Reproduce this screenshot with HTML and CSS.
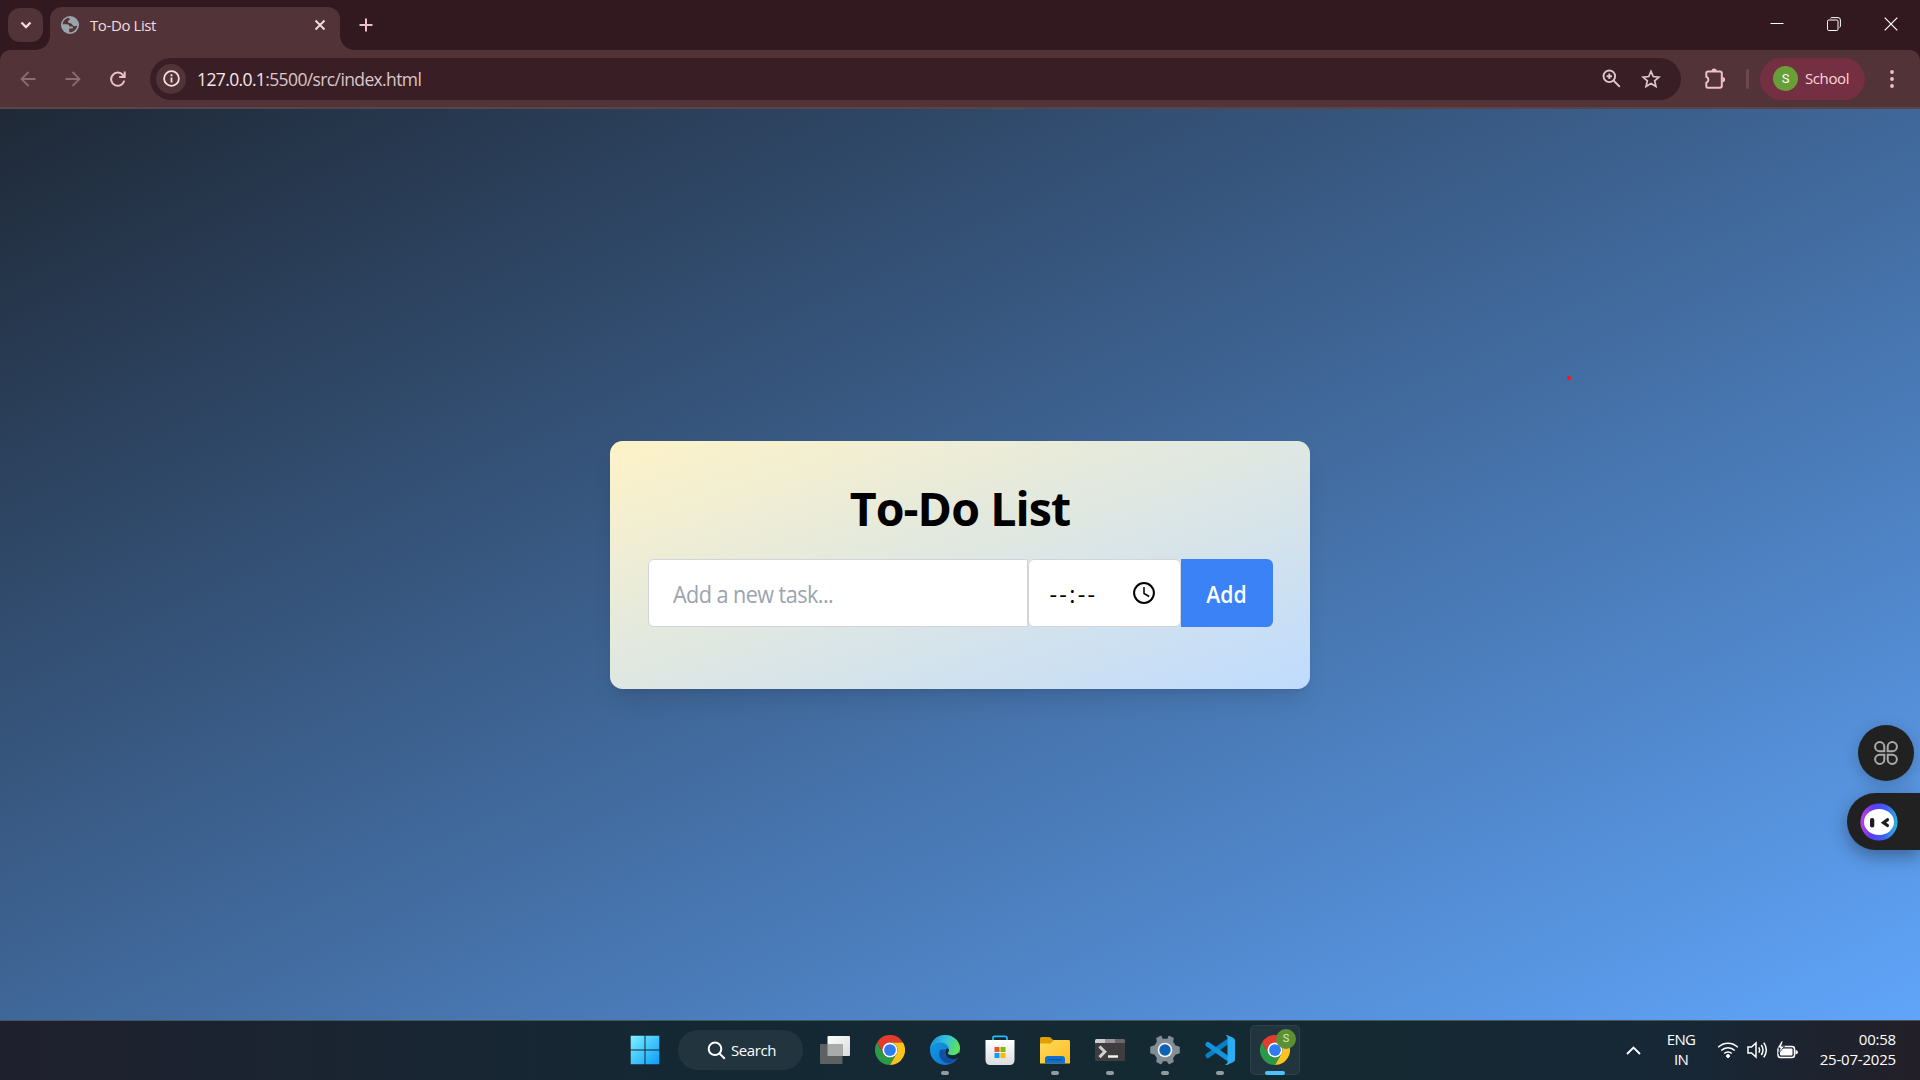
FILE: index.html
```html
<!DOCTYPE html>
<html lang="en">
<head>
<meta charset="utf-8">
<title>To-Do List</title>
<link rel="stylesheet" href="styles.css">
</head>
<body>
<svg class="defs" width="0" height="0" aria-hidden="true">
  <defs>
    <linearGradient id="win" x1="0" y1="0" x2="1" y2="1"><stop offset="0" stop-color="#7cf3ff"/><stop offset="1" stop-color="#0a9bf8"/></linearGradient>
    <linearGradient id="edgeTop" x1="0" y1="0.3" x2="1" y2="0.6"><stop offset="0" stop-color="#1c8fdc"/><stop offset=".45" stop-color="#32bfe0"/><stop offset="1" stop-color="#62e84c"/></linearGradient>
    <linearGradient id="edgeSide" x1="0" y1="0" x2="1" y2="1"><stop offset="0" stop-color="#169ce0"/><stop offset="1" stop-color="#0b6fd2"/></linearGradient>
    <linearGradient id="folder" x1="0" y1="0" x2="1" y2="1"><stop offset="0" stop-color="#ffda5e"/><stop offset="1" stop-color="#fdbd20"/></linearGradient>
    <linearGradient id="bag" x1="0" y1="0" x2="0" y2="1"><stop offset="0" stop-color="#fff"/><stop offset="1" stop-color="#dcdde0"/></linearGradient>
    <linearGradient id="pane" x1="0" y1="0" x2="1" y2="1"><stop offset="0" stop-color="#fff"/><stop offset="1" stop-color="#d9dadb"/></linearGradient>
    <linearGradient id="bot" x1="0" y1=".8" x2="1" y2=".9"><stop offset="0" stop-color="#b63ee8"/><stop offset=".3" stop-color="#5a3df2"/><stop offset=".65" stop-color="#3a62f5"/><stop offset="1" stop-color="#25c3d8"/></linearGradient>
    <symbol id="chrome" viewBox="0 0 48 48">
      <path fill="#e33b2e" d="M24 12H44.8A24 24 0 0 0 3.2 12L13.6 30 24 24Z"/>
      <path fill="#2b9a47" d="M3.2 12 13.6 30A12 12 0 0 0 34.4 30L24 48A24 24 0 0 1 3.2 12Z"/>
      <path fill="#fcc31e" d="M24 12H44.8A24 24 0 0 1 24 48L34.4 30A12 12 0 0 0 24 12Z"/>
      <circle cx="24" cy="24" r="12" fill="#fff"/><circle cx="24" cy="24" r="9.4" fill="#2f7bf0"/>
    </symbol>
  </defs>
</svg>
<div class="screen">
  <header class="tabstrip">
    <button class="tab-search" aria-label="Search tabs"><svg width="12" height="8" viewBox="0 0 12 8"><path d="M1.5 1.5 6 6l4.500-4.500" fill="none" stroke="#f3dde1" stroke-width="2.300"/></svg></button>
    <div class="tab">
      <svg class="globe" width="18" height="18" viewBox="0 0 18 18"><circle cx="9" cy="9" r="9" fill="#9aa5ab"/><path d="M8.200 1.800C4.500 2.200 2 5 1.700 8.300H6c1.600 0 2.300.9 2.300 2.200h2.400c.8 0 1.300.6 1.300 1.400v.7H8.200v3.600c4 .3 7.600-2.800 8-6.800-1.300.8-2.800 1-4 .3-1.300-.7-.9-1.800-2-2.200-1.200-.4-3-.1-3.200-1.500-.2-1.500 1.300-1.600 1.700-2.400z" fill="#513338"/></svg>
      <span class="tab-title">To-Do List</span>
      <svg class="close" width="12" height="12" viewBox="0 0 12 12"><path d="m1.500 1.500 9 9m0-9-9 9" stroke="#f3dde1" stroke-width="1.900"/></svg>
    </div>
    <svg class="plus" width="14" height="14" viewBox="0 0 14 14"><path d="M7 .5v13M.5 7h13" stroke="#efbfca" stroke-width="2"/></svg>
    <div class="window-controls">
      <svg width="14" height="14" viewBox="0 0 14 14"><path d="M.5 6.500h13" stroke="#fff" stroke-width="1"/></svg>
      <svg width="14" height="14" viewBox="0 0 14 14" fill="none" stroke="#fff"><rect x=".5" y="3" width="10.500" height="10.500" rx="1.200"/><path d="M3.500 1.200Q4 .6 5 .6h6q2.400 0 2.400 2.400v6q0 1-.8 1.500"/></svg>
      <svg width="14" height="14" viewBox="0 0 14 14"><path d="m.7.7 12.600 12.600m0-12.600L.7 13.300" stroke="#fff" stroke-width="1.200"/></svg>
    </div>
  </header>

  <nav class="toolbar">
    <svg class="nav-icon" width="16" height="16" viewBox="0 0 16 16" fill="none" stroke="#8d6b72" stroke-width="1.800"><path d="M15.500 8H2M8.500 1 1.500 8l7 7"/></svg>
    <svg class="nav-icon" width="16" height="16" viewBox="0 0 16 16" fill="none" stroke="#8d6b72" stroke-width="1.800"><path d="M.5 8H14M7.500 1l7 7-7 7"/></svg>
    <svg class="nav-icon" width="16" height="16" viewBox="0 0 16 16" fill="none" stroke="#efbfca" stroke-width="2"><path d="M14.200 9.600A6.600 6.600 0 1 1 13 4.200L14 5.500M14.700.5V6H9.200"/></svg>
    <div class="omnibox">
      <span class="site-info"><svg width="17" height="17" viewBox="0 0 17 17"><circle cx="8.500" cy="8.500" r="7.400" fill="none" stroke="#f6dfe3" stroke-width="1.800"/><path d="M8.500 7.600v5M8.500 4.200v2" stroke="#f6dfe3" stroke-width="1.800"/></svg></span>
      <span class="url"><b>127.0.0.1</b>:5500/src/index.html</span>
      <svg class="zoom" width="19" height="19" viewBox="0 0 19 19" fill="none" stroke="#dcc6ca" stroke-width="1.900"><circle cx="7.300" cy="7.300" r="5.800"/><path d="m11.500 11.500 6.300 6.300M7.300 4.600V10M4.600 7.300H10"/></svg>
      <svg class="star" width="20" height="20" viewBox="0 0 20 20" fill="none" stroke="#dcc6ca" stroke-width="1.700"><path d="m10 2.300 2.250 5.250 5.700.5-4.320 3.750 1.300 5.580L10 14.400l-4.930 2.980 1.300-5.580L2.050 8.050l5.700-.5z"/></svg>
    </div>
    <svg class="puzzle" width="22" height="22" viewBox="0 0 22 22"><path d="M4 3.500H16q1.800 0 1.800 1.800V18q0 1.700-1.800 1.700H3.800q-1.500 0-1.500-1.500v-3.400a3.200 3.200 0 0 0 0-6V5q0-1.500 1.700-1.500Z" fill="none" stroke="#efbfca" stroke-width="2"/><path d="M7.500 3a2.600 2.600 0 0 1 5.200 0zM18.500 9a2.600 2.600 0 0 1 0 5.200z" fill="#efbfca"/></svg>
    <i class="divider"></i>
    <div class="profile"><span class="avatar">S</span><span class="profile-name">School</span></div>
    <svg class="menu" width="4" height="18" viewBox="0 0 4 18" fill="#efbfca"><circle cx="2" cy="2" r="1.900"/><circle cx="2" cy="9" r="1.900"/><circle cx="2" cy="16" r="1.900"/></svg>
  </nav>

  <main class="page">
    <section class="card">
      <h1>To-Do List</h1>
      <div class="form">
        <div class="field task"><span>Add a new task...</span></div>
        <div class="field time"><span>--:--</span>
          <svg width="22" height="22" viewBox="0 0 22 22" fill="none" stroke="#000"><circle cx="11" cy="11" r="9.900" stroke-width="2"/><path d="M11 5v6.500l5.200 3" stroke-width="1.500"/></svg>
        </div>
        <button class="add"><span>Add</span></button>
      </div>
    </section>
    <i class="dot"></i>
    <div class="float-apps"><svg width="24" height="24" viewBox="0 0 24 24" fill="none" stroke="#a9a9a9" stroke-width="2"><path d="M10.300 10.300H5.600a4.600 4.600 0 1 1 4.700-4.700zM13.700 10.300V5.600a4.600 4.600 0 1 1 4.700 4.700zM10.300 13.700v4.700a4.600 4.600 0 1 1-4.700-4.700zM13.700 13.700h4.700a4.600 4.600 0 1 1-4.700 4.700z"/></svg></div>
    <div class="float-bot"><svg width="38" height="38" viewBox="0 0 38 38"><circle cx="19" cy="19" r="18.600" fill="url(#bot)"/><ellipse cx="19" cy="19" rx="15" ry="13" fill="#fff"/><rect x="10" y="15" width="4.300" height="9.500" rx="2" fill="#1c1c1c"/><path d="m27.500 16.700-4 3 4 2.800" fill="none" stroke="#1c1c1c" stroke-width="3.200" stroke-linecap="round"/></svg></div>
  </main>

  <footer class="taskbar">
    <div class="apps">
      <div class="slot"><svg width="30" height="30" viewBox="0 0 30 30"><path fill="url(#win)" d="M.7.700h13.800v13.800H.7zM15.500.700h13.800v13.800H15.500zM.7 15.500h13.800v13.800H.7zM15.500 15.500h13.800v13.800H15.500z"/></svg></div>
      <div class="search"><svg width="19" height="19" viewBox="0 0 19 19" fill="none" stroke="#fff" stroke-width="2"><circle cx="8" cy="7.800" r="6.300"/><path d="m12.400 12.400 5.400 5.400"/></svg><span>Search</span></div>
      <div class="slot"><svg width="30" height="30" viewBox="0 0 30 30"><rect x="7.500" y="1" width="22.500" height="20" rx="1" fill="url(#pane)"/><rect x="0" y="9" width="22.500" height="20" rx="1" fill="#5f6061"/><path d="M7.500 9h15v12h-15z" fill="#a9aaaa"/></svg></div>
      <div class="slot"><svg width="30" height="30"><use href="#chrome"/></svg></div>
      <div class="slot running"><svg width="30" height="30" viewBox="0 0 30 30"><circle cx="15" cy="15" r="15" fill="url(#edgeSide)"/><path fill="#134f9f" d="M10 15c-3 7 3 14 10 13.600 3-.9 5.800-3 7.500-5.500.5-.8-.2-1.300-1-.9-4 2-10 1-11.500-4-.5-1.700 0-3 .8-4z"/><path fill="url(#edgeTop)" d="M0 14.500C.5 6 7 0 15 0c9 0 15 6.500 15 12.800 0 4.700-3.500 7.400-7.500 7.400-2.800 0-5-.9-4.800-2 .3-.8 1.300-1.400 1.300-3.500C19 10.500 15 7.500 10 7.500 5 7.500 1 11 0 14.500Z"/><path fill="#142733" d="M19 14.500c0 2-1 2.800-1.300 3.700-.2 1.100 2 2 4.800 2 3 0 5-1 6.300-2.600l1.700 2-3 3.500c-4 2.500-10.500.5-12-4.600-.6-2 .2-4 1.500-5.200z"/></svg></div>
      <div class="slot"><svg width="30" height="30" viewBox="0 0 30 30"><path d="M8 7V3q0-1.700 1.700-1.700h10.600Q22 1.300 22 3v4" fill="none" stroke="#27bdf2" stroke-width="1.700"/><path d="M.5 5h29v20q0 5-5 5h-19q-5 0-5-5z" fill="url(#bag)"/><path fill="#f25022" d="M9.500 12h5v5h-5z"/><path fill="#7fba00" d="M15.500 12h5v5h-5z"/><path fill="#00a4ef" d="M9.500 18h5v5h-5z"/><path fill="#ffb900" d="M15.500 18h5v5h-5z"/></svg></div>
      <div class="slot running"><svg width="30" height="30" viewBox="0 0 30 30"><path d="M0 3.500Q0 2 1.500 2H9q1 0 1.800.8L13 5h15q2 0 2 2v10H0z" fill="#e09f05"/><path d="M0 8.500h10.500L14 5h14.500Q30 5 30 6.500v22H0z" fill="url(#folder)"/><path d="M5 28.500V24q0-3 3-3h14q3 0 3 3v4.500z" fill="#0f70ce"/><path d="M8.500 24.700h13" stroke="#084f9b"/></svg></div>
      <div class="slot running"><svg width="30" height="30" viewBox="0 0 30 30"><rect y="4" width="30" height="22" rx="1.500" fill="#3e3e3e"/><path fill="#cfcbd1" d="M0 8V5.500Q0 4 1.500 4H10v4z"/><path fill="#98939b" d="M10 4h10v4H10z"/><path fill="#6b666e" d="M20 4h8.500Q30 4 30 5.500V8H20z"/><path d="m4.500 11.500 5.300 5.300-5.300 5.300" fill="none" stroke="#d0d0d0" stroke-width="3"/><path d="M13 21.500h10" stroke="#f2f2f2" stroke-width="2.500"/></svg></div>
      <div class="slot running"><svg width="30" height="30" viewBox="0 0 30 30"><path fill="#848d96" stroke="#848d96" stroke-width="1.500" stroke-linejoin="round" d="m12 4.500-1-3-4 2 .7 3.500L5 11l-4 1.200v5.600L5 19l2.700 4-.7 3.500 4 2 1.700-3h4.600l1.700 3 4-2-.7-3.500 2.700-4 4-1.200v-5.600L25 11l-2.700-4 .7-3.500-4-2-1 3z"/><circle cx="15" cy="15" r="7.300" fill="#f4f6f8"/><circle cx="15" cy="15" r="5.700" fill="#0d62b4"/></svg></div>
      <div class="slot running"><svg width="30" height="30" viewBox="0 0 30 30"><path d="M22 7 3 20.500" stroke="#087fc7" stroke-width="5" stroke-linecap="round"/><path d="M3 9.500 22 23" stroke="#1592df" stroke-width="5" stroke-linecap="round"/><path d="M20.500 0Q21.500-.2 22.500.3L28.500 3Q30 3.800 30 5.500v19q0 1.700-1.500 2.500l-6 2.700Q21 30.300 20 29.500 22.500 29 22.500 27V3Q22.500.8 20.500 0Z" fill="#2badf4"/></svg></div>
      <div class="slot active"><svg width="30" height="30"><use href="#chrome"/></svg><span class="badge">S</span></div>
    </div>
    <div class="tray">
      <svg class="chevron" width="15" height="9" viewBox="0 0 15 9"><path d="m1 8 6.500-6.500L14 8" fill="none" stroke="#fff" stroke-width="1.900"/></svg>
      <div class="lang"><span>ENG</span><span>IN</span></div>
      <svg class="wifi" width="22" height="18" viewBox="0 0 22 18" fill="none" stroke="#fff" stroke-width="1.500"><path d="M1.200 6.300a13.800 13.800 0 0 1 19.600 0M4.200 9.500a9.600 9.600 0 0 1 13.600 0M7.200 12.500a5.400 5.400 0 0 1 7.600 0"/><circle cx="11" cy="15" r="1.500" fill="#fff" stroke-width="1"/></svg>
      <svg class="sound" width="21" height="18" viewBox="0 0 21 18" fill="none" stroke="#fff" stroke-width="1.500"><path d="M1 6h3.500L9 2v14l-4.500-4H1zM11.800 6.300q1.600 2.700 0 5.400M14.300 4q3.400 5 0 10M16.800 1.700q5 7.300 0 14.600"/></svg>
      <svg class="battery" width="21" height="18" viewBox="0 0 21 18"><rect x="1" y="5.500" width="16.500" height="11" rx="2.500" fill="none" stroke="#fff" stroke-width="1.500"/><rect x="3" y="7.500" width="12.500" height="7" rx="1" fill="#fff"/><path d="M18.500 9v4.500q2.500-.5 2.500-2.300T18.500 9z" fill="#fff"/><path d="M4.500-.2.200 7h3L1.500 12.500 7.500 5.200h-3L6.200 0z" fill="#fff" stroke="#172632" stroke-width=".8"/></svg>
      <div class="clock"><span class="hour">00:58</span><span class="date">25-07-2025</span></div>
    </div>
  </footer>
</div>
</body>
</html>
```
FILE: styles.css
```css
* { box-sizing: border-box; }
body { margin: 0; font-family: "Open Sans", "Noto Sans", sans-serif; overflow: hidden; background: #31191f; }
button { border: 0; padding: 0; font-family: inherit; }
svg { display: block; flex: none; }
.defs { position: absolute; }
.screen { width: 1920px; height: 1080px; display: flex; flex-direction: column; }

.tabstrip { height: 50px; display: flex; align-items: flex-start; background: #31191f; }
.tab-search { width: 35px; height: 34px; margin: 8px 7px 0 8px; border-radius: 12px; background: #513338; display: grid; place-items: center; }
.tab { position: relative; width: 290px; height: 43px; margin-top: 7px; padding: 0 14px 7px 11px; display: flex; align-items: center; border-radius: 12px 12px 0 0; background: #513338; }
.tab::before, .tab::after { content: ""; position: absolute; bottom: 0; width: 14px; height: 14px; }
.tab::before { left: -14px; background: radial-gradient(circle at 0 0, transparent 13.500px, #513338 14px); }
.tab::after { right: -14px; background: radial-gradient(circle at 100% 0, transparent 13.500px, #513338 14px); }
.tab-title { margin-left: 11px; flex: 1; font-size: 15px; letter-spacing: -0.400px; color: #f3dde1; white-space: nowrap; }
.plus { margin: 18px 0 0 19px; }
.window-controls { display: flex; gap: 43px; margin: 17px 22px 0 auto; }

.toolbar { height: 59px; display: flex; align-items: center; background: #513338; border-radius: 10px 10px 0 0; border-bottom: 2px solid #594549; padding-left: 20px; }
.nav-icon { margin-right: 29px; }
.omnibox { width: 1531px; height: 42px; margin-left: -5px; padding: 0 20px 0 6px; border-radius: 21px; display: flex; align-items: center; background: #391f25; }
.site-info { width: 30px; height: 30px; border-radius: 50%; display: grid; place-items: center; background: #513338; }
.url { flex: 1; margin-left: 11px; font-size: 17.500px; letter-spacing: -0.620px; color: #dcc6ca; }
.url b { font-weight: 400; color: #f9e6ea; }
.star { margin-left: 20px; }
.puzzle { margin-left: 23px; }
.divider { width: 3px; height: 20px; margin-left: 20px; background: #6b474f; border-radius: 1px; }
.profile { width: 105px; height: 42px; margin-left: 11px; padding-left: 13px; border-radius: 21px; display: flex; align-items: center; background: #742f42; color: #ffd5de; }
.avatar { width: 25px; height: 25px; border-radius: 50%; background: #689f38; color: #fff; font: 13px/25px Roboto, sans-serif; text-align: center; }
.profile-name { margin-left: 7px; padding-bottom: 2px; font-size: 15px; letter-spacing: -0.400px; }
.menu { margin-left: 25px; }

.page { position: relative; height: 911px; display: flex; align-items: center; justify-content: center; background: linear-gradient(to bottom right, #1f2937, #60a5fa); }
.card { width: 700px; height: 248px; padding: 37.500px; border-radius: 12.500px; background: linear-gradient(to bottom right, #fef3c7, #bfdbfe); box-shadow: 0 16px 23px -5px rgba(0,0,0,.1), 0 6px 9px -6px rgba(0,0,0,.1); }
h1 { margin: 0 0 23px; padding-top: 2px; font-size: 46.500px; line-height: 56px; font-weight: 700; text-align: center; letter-spacing: -0.900px; }
.form { height: 68px; display: flex; }
.field { height: 68px; border: 1.500px solid #d1d5db; background: #fff; display: flex; align-items: center; font-size: 23.500px; }
.task { width: 380px; padding: 2px 0 0 24px; border-radius: 6px 0 0 6px; color: #9ca3af; letter-spacing: -0.600px; }
.task span { transform: scaleX(.92); transform-origin: left; }
.time { width: 153px; padding: 0 25px 0 21px; border-radius: 6px; justify-content: space-between; letter-spacing: 2.300px; }
.time span { padding-top: 2px; }
.add { flex: 1; padding-top: 1px; background: #3b82f6; border-radius: 0 6px 6px 0; color: #fff; font-size: 23.500px; font-weight: 600; }
.add span { display: inline-block; transform: scaleX(.9); }
.dot { position: absolute; left: 1567px; top: 267px; width: 4px; height: 4px; border-radius: 1px; background: #ee1c24; }
.float-apps { position: absolute; left: 1858px; top: 616px; width: 56px; height: 56px; border-radius: 50%; display: grid; place-items: center; background: #212121; box-shadow: 0 4px 16px rgba(0,0,0,.2); }
.float-bot { position: absolute; left: 1847px; top: 684px; width: 73px; height: 57px; padding-left: 13px; border-radius: 29px 0 0 29px; display: flex; align-items: center; background: #212121; box-shadow: 0 6px 18px rgba(0,0,0,.35); }

.taskbar { height: 60px; display: grid; grid-template-columns: 620px 680px 620px; border-top: 1px solid #46545c; background: linear-gradient(90deg, #1f202d, #1b2431 15%, #142834 35%, #142a32 65%, #172736 88%, #231f28); color: #fff; }
.apps { grid-column: 2; display: flex; align-items: center; gap: 5px; padding-bottom: 1px; }
.slot { position: relative; flex: none; width: 50px; height: 50px; display: grid; place-items: center; border-radius: 5px; }
.search { flex: none; width: 125px; height: 40px; margin: 0 2px 0 3px; padding-left: 29px; border-radius: 20px; display: flex; align-items: center; gap: 5px; background: #22343e; font-size: 15px; letter-spacing: -0.400px; }
.running::after { content: ""; position: absolute; left: 21px; bottom: 0; width: 8px; height: 4px; border-radius: 2px; background: #939ba0; }
.active { background: #22353e; box-shadow: inset 0 0 0 1px #2d3f48; }
.active::after { content: ""; position: absolute; left: 15px; bottom: 0; width: 20px; height: 4px; border-radius: 2px; background: #4cc2ff; }
.badge { position: absolute; left: 26px; top: 4px; width: 20px; height: 20px; border-radius: 50%; background: #5b9130; color: #dce8d2; font: 11px/20px Roboto, sans-serif; text-align: center; }
.tray { grid-column: 3; display: flex; align-items: center; justify-content: flex-end; padding: 0 24px 1px 0; font-size: 15px; line-height: 20px; }
.lang { width: 32px; margin-left: 24px; padding-bottom: 2px; display: grid; text-align: center; letter-spacing: -0.700px; }
.wifi { margin-left: 20px; }
.sound { margin-left: 8px; }
.battery { margin-left: 9px; }
.clock { width: 78px; margin-left: 20px; padding-bottom: 3px; display: grid; text-align: right; letter-spacing: -0.200px; }
```
